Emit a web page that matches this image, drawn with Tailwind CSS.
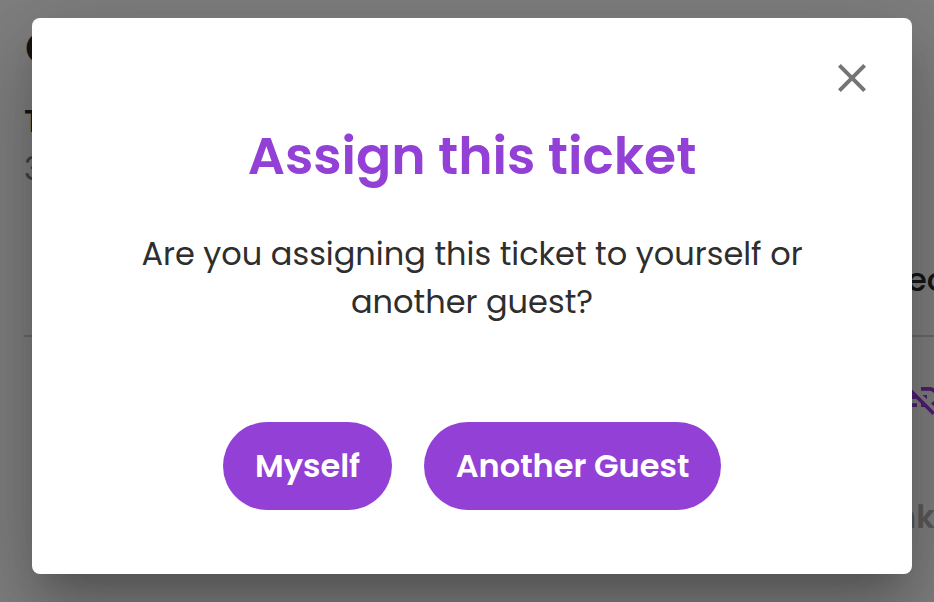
<!DOCTYPE html>
<html lang="en">
<head>
<meta charset="utf-8">
<title>Assign this ticket</title>
<script src="https://cdn.jsdelivr.net/npm/@tailwindcss/browser@4"></script>
</head>
<body class="relative h-[602px] w-[934px] overflow-hidden bg-white font-['Poppins','Inter',sans-serif] antialiased">
  <main class="h-full w-full overflow-hidden pl-6 text-[#2c2c2c]">
    <div class="flex h-[337px] justify-between border-b-2 border-[#d4d4d4] whitespace-nowrap">
      <div>
        <h2 class="pt-[23px] pl-px text-[46px] leading-[50px] font-semibold">Order</h2>
        <p class="mt-[28px] text-[32px] leading-10 font-semibold">Ticket</p>
        <p class="mt-[8px] text-[32px] leading-10 text-[#808080]">3 tickets</p>
      </div>
      <p class="w-[27px] pt-[260px] text-[32px] leading-10 font-medium">ed</p>
    </div>
    <div class="ml-[871px] w-12 pt-9 text-[#9c40e0]">
      <svg class="size-12 max-w-none" viewBox="0 0 24 24" fill="currentColor"><path d="M17 7h-4v1.9h4c1.71 0 3.1 1.39 3.1 3.1 0 1.43-.98 2.63-2.31 2.98l1.46 1.46C20.88 15.61 22 13.95 22 12c0-2.76-2.24-5-5-5zm-1 4h-2.19l2 2H16zM2 4.27l3.11 3.11C3.29 8.12 2 9.91 2 12c0 2.76 2.24 5 5 5h4v-1.9H7c-1.71 0-3.1-1.39-3.1-3.1 0-1.59 1.21-2.9 2.76-3.08L8.73 11H8v2h2.73L13 15.27V17h1.73l4.01 4L20 19.74 3.27 3z"/></svg>
    </div>
    <p class="ml-[871px] pt-[76px] text-[32px] leading-10 font-semibold text-[#b4b4b4]">nk</p>
  </main>

  <div class="absolute inset-0 bg-black/50 px-8 pt-[18px]">
    <section role="dialog" class="relative flex h-[556px] w-[880px] flex-col items-center rounded-lg bg-white shadow-[0_22px_30px_-14px_rgba(0,0,0,0.2),0_48px_76px_6px_rgba(0,0,0,0.14),0_18px_92px_16px_rgba(0,0,0,0.12)]">
      <button aria-label="Close" class="absolute top-9 right-9 size-12">
        <svg class="size-12" viewBox="0 0 24 24" fill="#757575"><path d="M19 6.41 17.59 5 12 10.59 6.41 5 5 6.41 10.59 12 5 17.59 6.41 19 12 13.41 17.59 19 19 17.59 13.41 12z"/></svg>
      </button>
      <h1 class="mt-[102px] text-[52px] leading-[72px] font-semibold whitespace-nowrap text-[#9340d6]">Assign this ticket</h1>
      <p class="mt-[38px] text-center text-[32px] leading-[48px] whitespace-nowrap text-[#2e2e2e]">Are you assigning this ticket to yourself or<br>another guest?</p>
      <div class="mt-[96px] flex gap-8 text-[32px] font-semibold whitespace-nowrap text-white">
        <button class="flex h-[88px] w-[169px] items-center justify-center rounded-full bg-[#9340d6]">Myself</button>
        <button class="flex h-[88px] w-[297px] items-center justify-center rounded-full bg-[#9340d6]">Another Guest</button>
      </div>
    </section>
  </div>
</body>
</html>
